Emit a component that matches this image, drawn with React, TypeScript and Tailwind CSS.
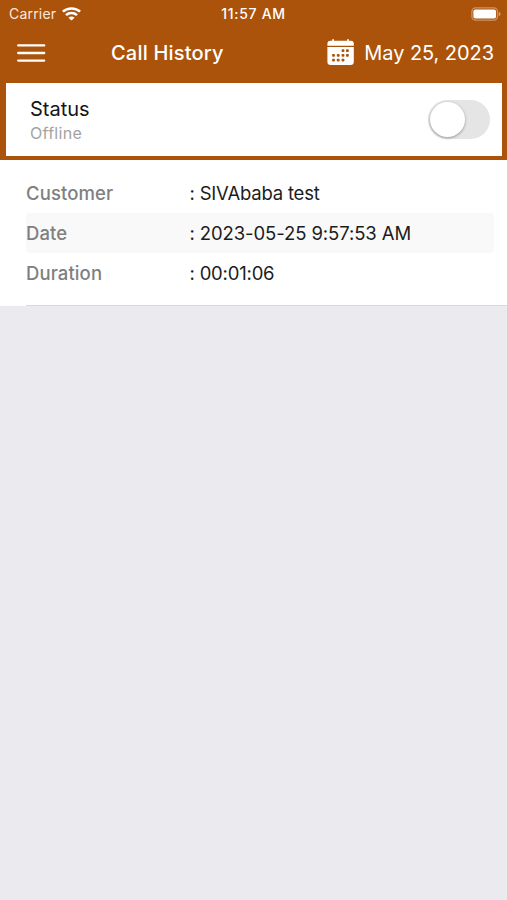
import React, { useState } from 'react';

interface CallRecord {
  id: number;
  customer: string;
  date: string;
  duration: string;
}

const calls: CallRecord[] = [
  { id: 1, customer: 'SIVAbaba test', date: '2023-05-25 9:57:53 AM', duration: '00:01:06' },
];

const MenuIcon = () => (
  <svg width="29" height="20" viewBox="0 0 29 20" stroke="#fff" strokeWidth="2.3" strokeLinecap="round">
    <path d="M1.2 2.4 H27.2 M1.2 10 H27.2 M1.2 17.6 H27.2" />
  </svg>
);

const WifiIcon = () => (
  <svg width="19" height="14" viewBox="0 0 18 14" preserveAspectRatio="none" fill="none" stroke="#fff" strokeWidth="2.5">
    <path d="M0.8 4.6 C5.3 0.3 12.7 0.3 17.2 4.6" />
    <path d="M3.8 8.2 C6.7 5.4 11.3 5.4 14.2 8.2" />
    <path d="M9 13.4 L6.1 10.7 C7.7 9.2 10.3 9.2 11.9 10.7 Z" fill="#fff" stroke="none" />
  </svg>
);

const BatteryIcon = () => (
  <svg width="31" height="14" viewBox="0 0 31 14">
    <rect x="0.9" y="0.9" width="25.6" height="12.2" rx="3.6" fill="none" stroke="#fff" strokeOpacity="0.38" strokeWidth="1.3" />
    <rect x="2.4" y="2.4" width="22.6" height="9.2" rx="1.8" fill="#fff" />
    <path d="M27.8 4.8 C30.2 5.6 30.2 8.4 27.8 9.2 Z" fill="#fff" fillOpacity="0.45" />
  </svg>
);

const dots = [
  [16, 11.6], [20.4, 11.6],
  [6.5, 16.4], [11.2, 16.4], [16, 16.4], [20.4, 16.4],
  [6.5, 21.2], [11.2, 21.2], [16, 21.2],
];

const CalendarIcon = () => (
  <svg width="27" height="27" viewBox="0 0 27 27">
    <path d="M3.4 1.8 H23.8 A3 3 0 0 1 26.8 4.8 V6.7 H0.4 V4.8 A3 3 0 0 1 3.4 1.8 Z" fill="#fff" />
    <path d="M0.4 7.9 H26.8 V22.8 A3.2 3.2 0 0 1 23.6 26 H3.6 A3.2 3.2 0 0 1 0.4 22.8 Z" fill="#fff" />
    <path d="M6.1 1 V4 M21 1 V4" stroke="#fff" strokeWidth="1.8" strokeLinecap="round" />
    {dots.map(([x, y]) => (
      <rect key={`${x}-${y}`} x={x - 1.4} y={y - 1.4} width="2.8" height="2.8" rx="0.8" fill="#ab530a" />
    ))}
  </svg>
);

const Row = ({ label, value, shaded }: { label: string; value: string; shaded?: boolean }) => (
  <div className={`flex h-10 items-center rounded pt-[3px] text-[18.5px] ${shaded ? 'bg-[#f9f9f9]' : ''}`}>
    <span className="w-[163.5px] font-medium tracking-[0.1px] text-[#808080]">{label}</span>
    <span className={`whitespace-pre text-[#1c1c1c] ${shaded ? 'tracking-[-0.1px]' : 'tracking-[-0.2px]'}`}>: {value}</span>
  </div>
);

export default function App() {
  const [online, setOnline] = useState(false);

  return (
    <div className="min-h-screen bg-[#ebebef] font-['Inter',sans-serif]">
      <header className="h-[160px] bg-[#ab530a] text-white">
        <div className="grid h-[27px] grid-cols-3 items-center text-[14px]">
          <div className="flex items-center gap-[6px] pl-[9px]">
            <span className="tracking-[0.2px] text-[#fbe9dc]">Carrier</span>
            <WifiIcon />
          </div>
          <span className="text-center font-medium tracking-[0.7px]">11:57 AM</span>
          <div className="flex justify-end pr-[5px]"><BatteryIcon /></div>
        </div>

        <div className="flex h-[56px] items-center pb-[5px] pl-[17px] pr-[13px]">
          <button aria-label="Menu"><MenuIcon /></button>
          <h1 className="ml-[65px] text-[20px] font-medium tracking-[0.2px]">Call History</h1>
          <button className="ml-auto flex items-center gap-[10px] text-[20px] tracking-[-0.06px]">
            <CalendarIcon />
            <span>May 25, 2023</span>
          </button>
        </div>

        <div className="ml-[6px] mr-[5px] flex h-[73px] items-center justify-between bg-white pl-6 pr-3">
          <div className="pt-[2px]">
            <p className="text-[20px] leading-6 text-[#151515]">Status</p>
            <p className="text-[16px] leading-6 tracking-[0.3px] text-[#a3a3a3]">{online ? 'Online' : 'Offline'}</p>
          </div>
          <button
            role="switch"
            aria-checked={online}
            aria-label="Status"
            onClick={() => setOnline(!online)}
            className={`flex h-[39px] w-[62px] items-center rounded-full p-[2px] ${online ? 'justify-end bg-green-500' : 'bg-[#e5e5e5]'}`}
          >
            <span className="size-[35px] rounded-full bg-white shadow-[0_1px_3px_rgba(0,0,0,0.35)]" />
          </button>
        </div>
      </header>

      <main>
        {calls.map(call => (
          <div key={call.id} className="h-[146px] bg-white pl-[26px]">
            <div className="flex h-full flex-col border-b border-[#d9d9dc] pr-[13px] pt-[12.5px]">
              <Row label="Customer" value={call.customer} />
              <Row label="Date" value={call.date} shaded />
              <Row label="Duration" value={call.duration} />
            </div>
          </div>
        ))}
      </main>
    </div>
  );
}
